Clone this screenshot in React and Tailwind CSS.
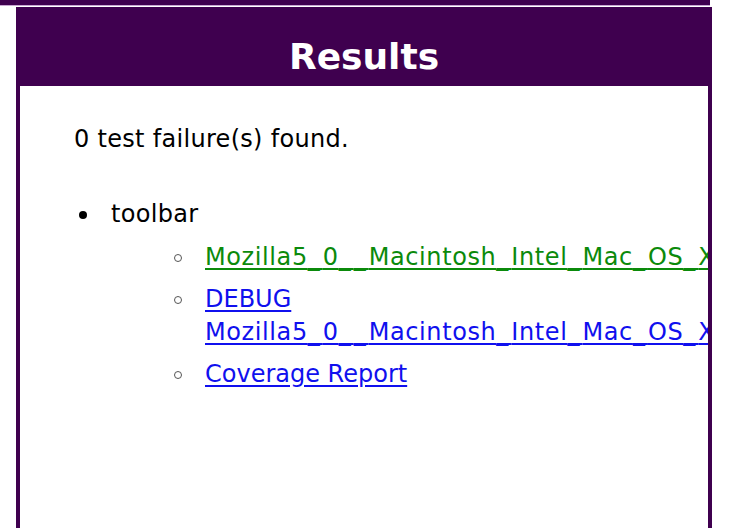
const LONG = 'Mozilla5_0__Macintosh_Intel_Mac_OS_X_10_6_8__AppleWebKit';

// underscores are drawn a little wider, as in the Verdana original
function Wide({ text }) {
  return text.split('_').map((part, i) => (
    <span key={i}>
      {i > 0 && <span className="tracking-[3px]">_</span>}
      {part}
    </span>
  ));
}

export default function App() {
  const items = [
    { lines: [LONG], color: 'text-[#0b8a0b] decoration-[#0b8a0b]' },
    { lines: ['DEBUG', LONG], color: 'text-[#1010ee] decoration-[#1010ee]' },
    { lines: ['Coverage Report'], color: 'text-[#1010ee] decoration-[#1010ee]' },
  ];

  return (
    <div className="w-[740px] h-[528px] overflow-hidden bg-white font-['DejaVu_Sans',sans-serif]">
      {/* top bar of the previous panel */}
      <div className="w-[710px] h-[6px] bg-[#3f004f] border-b border-[#c9a6d2]" />

      {/* Results panel */}
      <div className="ml-[16px] mt-[1px] w-[696px] h-[521px] border-x-4 border-[#3f004f] bg-white overflow-hidden">
        <div className="h-[79px] bg-[#3f004f] pt-[32px] text-center text-white text-[36px] leading-[36px] font-bold">
          Results
        </div>

        <div className="pl-[54px] pt-[37px] text-[24px] leading-[33px] tracking-[0.3px]">
          <p className="text-black">0 test failure(s) found.</p>

          <div className="mt-[42px] flex items-start">
            <span className="mt-[13px] ml-[5px] w-[8px] h-[8px] rounded-full bg-black shrink-0" />
            <div className="ml-[24px] flex-1 min-w-0">
              <p className="text-black">toolbar</p>

              <ul className="mt-[10px] ml-[63px] flex flex-col gap-[9px]">
                {items.map((it, i) => (
                  <li key={i} className="flex items-start">
                    <span className="mt-[13px] w-[8px] h-[8px] rounded-full border-[1.5px] border-[#555] shrink-0" />
                    <a
                      href="#"
                      className={`ml-[23px] whitespace-nowrap underline underline-offset-[3px] tracking-normal ${it.color}`}
                    >
                      {it.lines.map((l, j) => (
                        <span key={j} className={l === LONG ? 'block tracking-[0.6px]' : 'block'}>
                          <Wide text={l} />
                        </span>
                      ))}
                    </a>
                  </li>
                ))}
              </ul>
            </div>
          </div>
        </div>
      </div>
    </div>
  );
}
